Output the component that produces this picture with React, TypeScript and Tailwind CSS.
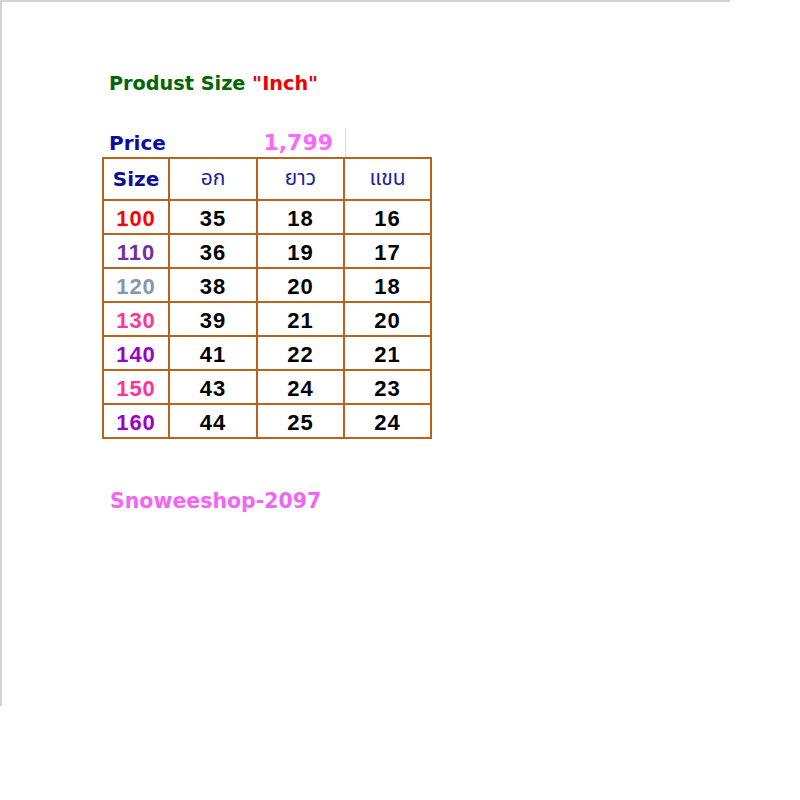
import React from "react";

const rows: [string, string, string, string, string][] = [
  ["100", "text-[#ff0000]", "35", "18", "16"],
  ["110", "text-[#7030a0]", "36", "19", "17"],
  ["120", "text-[#8497b0]", "38", "20", "18"],
  ["130", "text-[#ff3399]", "39", "21", "20"],
  ["140", "text-[#9900cc]", "41", "22", "21"],
  ["150", "text-[#ff3399]", "43", "24", "23"],
  ["160", "text-[#9900cc]", "44", "25", "24"],
];

function NumCell({ value, color }: { value: string; color: string }) {
  return (
    <div
      className={`h-[32px] pt-[2px] bg-white flex items-center justify-center text-[22px] font-bold tracking-[1px] font-['Liberation_Sans',Arial,sans-serif] ${color}`}
    >
      {value}
    </div>
  );
}

export default function App() {
  return (
    <div className="relative w-[800px] h-[800px] bg-white">
      <div className="w-[730px] h-[706px] border-t-2 border-l-2 border-[#d4d4d4]">
        <div className="pl-[100px] pt-[69px]">
          <div className="h-[26px] pl-[7px] flex items-center text-[19.25px] font-bold text-[#006600] leading-none font-['DejaVu_Sans',Verdana,sans-serif]">
            Produst Size&nbsp;<span className="text-[#ee0000]">"Inch"</span>
          </div>
          <div className="mt-[31px] h-[29px] flex items-center w-[330px] font-['DejaVu_Sans',Verdana,sans-serif]">
            <div className="w-[156px] pl-[7px] text-[20px] font-bold text-[#0a0aa8] leading-none">
              Price
            </div>
            <div className="w-[87px] pr-[12px] text-right text-[22px] font-bold text-[#ff66ff] leading-none">
              1,799
            </div>
            <div className="w-px h-full bg-[#dcdcdc]" />
          </div>
          <div className="grid grid-cols-[64px_86px_85px_85px] gap-[2px] p-[2px] bg-[#b8621e] w-[330px]">
            <div className="h-[40px] bg-white flex items-center justify-center text-[20px] font-bold text-[#0d0d9c] font-['DejaVu_Sans',Verdana,sans-serif]">
              Size
            </div>
            {["อก", "ยาว", "แขน"].map((t) => (
              <div
                key={t}
                className="h-[40px] bg-white flex items-center justify-center text-[21px] text-[#2020a0] font-['Noto_Sans_Thai','Noto_Sans',sans-serif]"
              >
                {t}
              </div>
            ))}
            {rows.map((r) => (
              <React.Fragment key={r[0]}>
                <NumCell value={r[0]} color={r[1]} />
                <NumCell value={r[2]} color="text-black" />
                <NumCell value={r[3]} color="text-black" />
                <NumCell value={r[4]} color="text-black" />
              </React.Fragment>
            ))}
          </div>
          <div className="mt-[49px] pl-[8px] h-[26px] flex items-center text-[20.5px] font-bold text-[#f266f2] leading-none font-['DejaVu_Sans',Verdana,sans-serif]">
            Snoweeshop-2097
          </div>
        </div>
      </div>
    </div>
  );
}
